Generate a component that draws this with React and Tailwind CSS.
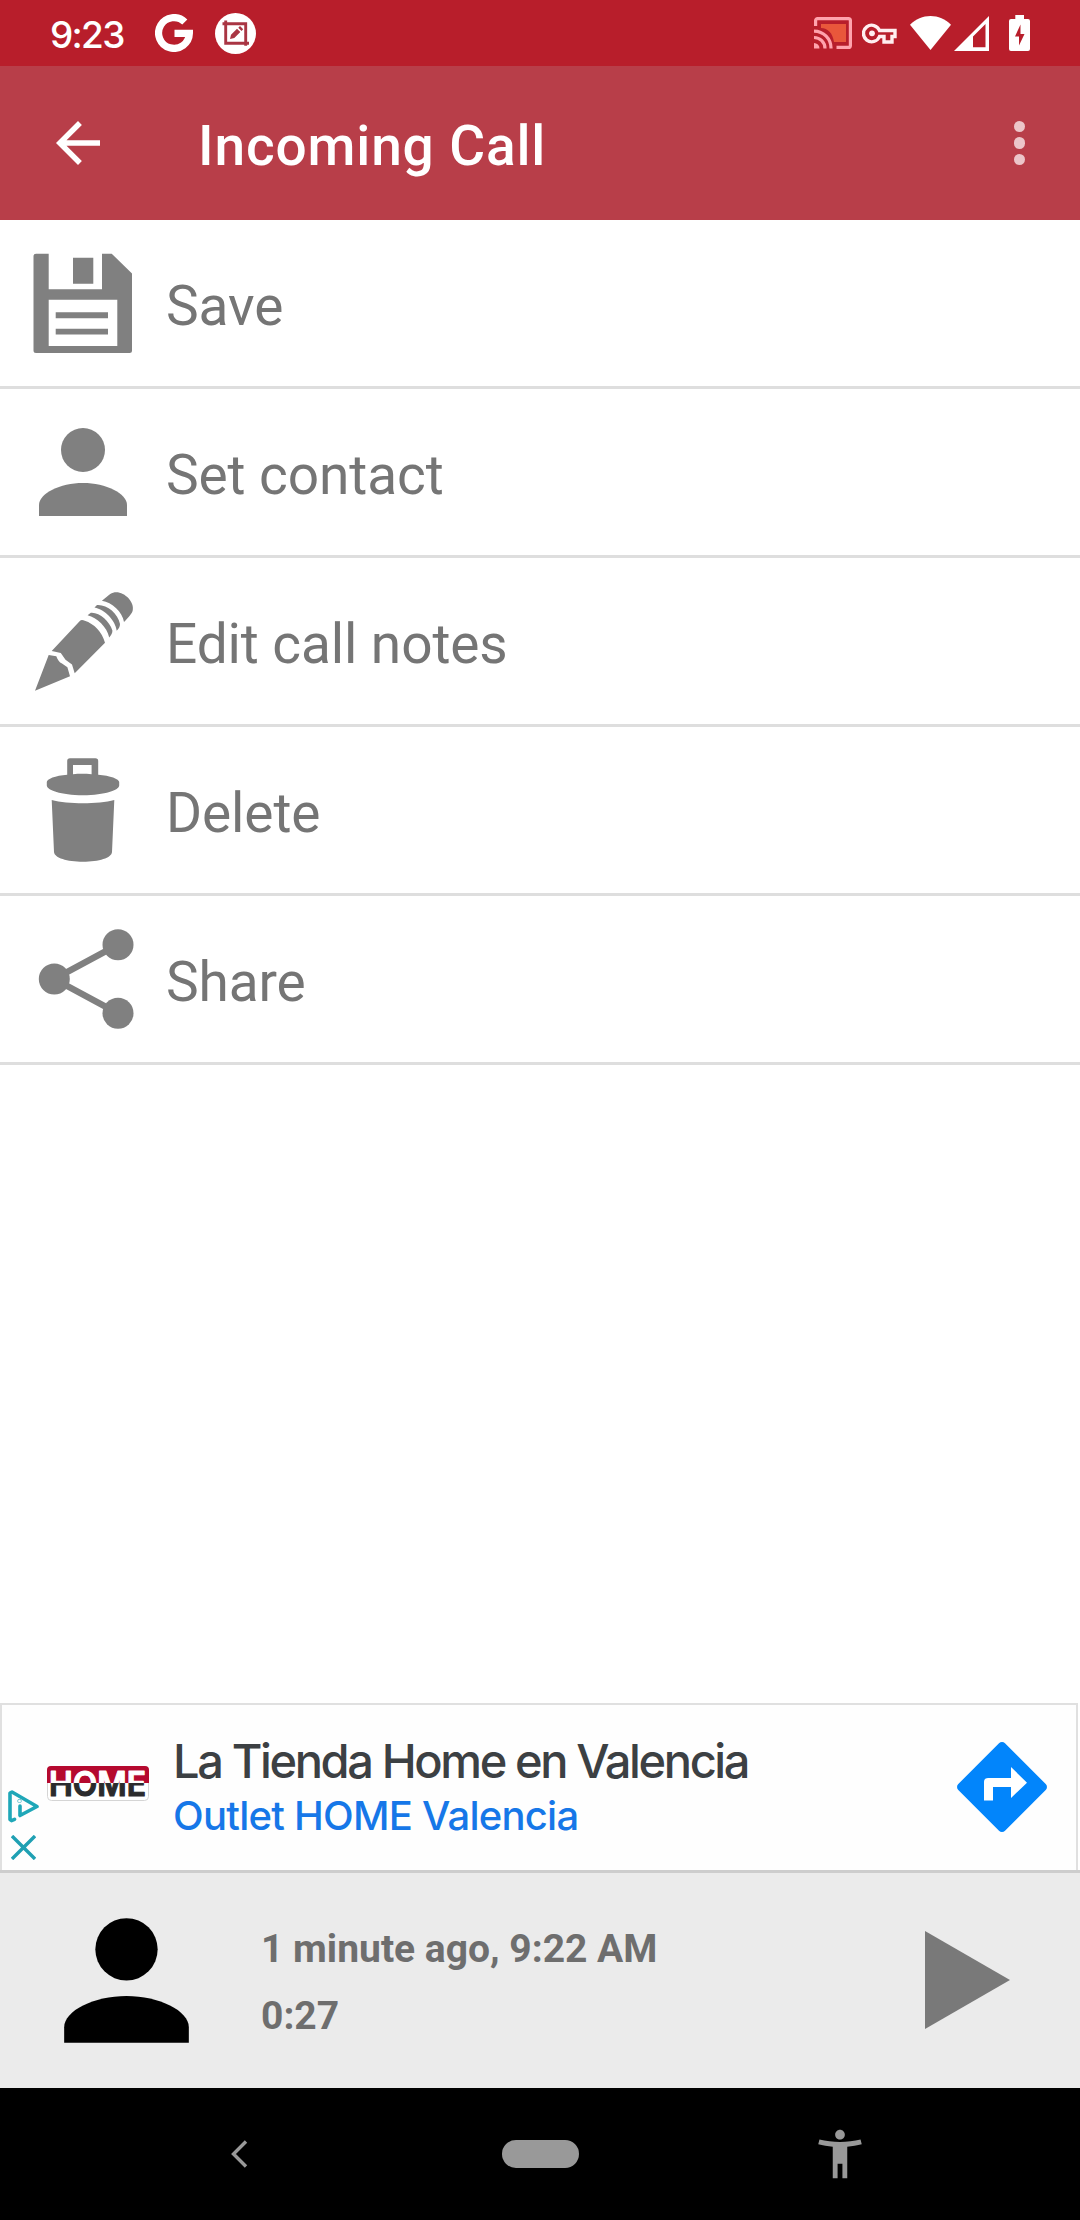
const ICON = 'h-[132px] w-[132px] shrink-0 fill-[#808080]';

function PersonIcon({ className }) {
    return (
        <svg viewBox="0 0 24 24" className={className}>
            <circle cx="12" cy="8" r="4" />
            <path d="M12 14c-4.2 0-8 1.9-8 4v2h16v-2c0-2.1-3.8-4-8-4z" />
        </svg>
    );
}

function SaveIcon() {
    return (
        <svg viewBox="0 0 132 132" className={ICON}>
            <path
                fillRule="evenodd"
                d="M19 16.7h12.7v35.6H85V16.7h9.7L115 36.5v77a2.5 2.5 0 0 1-2.5 2.5H19a2.5 2.5 0 0 1-2.5-2.5V19.2a2.5 2.5 0 0 1 2.5-2.5zM31.7 62.7V109h68.6V62.700z"
            />
            <path d="M56 20.7h20.3v26H56zM38.7 75.3H91v5.9H38.7zM38.7 91.7H91v5.7H38.7z" />
        </svg>
    );
}

function PencilIcon() {
    return (
        <svg viewBox="0 0 132 132" className={ICON}>
            <path d="M18 115.7 31.7 80l7.6 1.2c1.4 3.8 3 6 5.7 7.3l5.4 3.7 2.6 9z" />
            <path d="M34.7 76 62.6 46.2c1.4-1.5 3-1.2 5.2-.5C77 48.7 85 56.5 88 67.7L57.7 98.3 55 89.5l-6.500-4.7-4.7-6.800z" />
            <path d="M70.6 40.3 73.8 37.8C82.5 37 92.5 46 95.4 55.5c.2 2.5-1.2 4.8-3.2 7C90 52 80 42.5 70.6 40.3z" />
            <path d="M77.5 32.5 80 30c9.5-.8 21 8 23 19 0 2.8-1.3 4.9-3.3 6.7C98.5 45.5 88 34.5 77.5 32.5z" />
            <path d="M84.9 25.7 93.2 19c10-6.5 25 6.5 22.5 16.5-.6 3-4.5 7.2-8.7 11.5C105.5 37 95 27.3 84.9 25.7z" />
        </svg>
    );
}

function TrashIcon() {
    return (
        <svg viewBox="0 0 132 132" className={ICON}>
            <path
                fillRule="evenodd"
                d="M53 14.3h25.4a2.8 2.8 0 0 1 2.8 2.8v13.6c12 .9 21 4.3 21 7.3v3.500c0 4.5-14 9.7-36.2 9.7s-36.2-5.2-36.2-9.7V38c0-3 8.4-6.4 20.4-7.3V17.1a2.8 2.8 0 0 1 2.8-2.8zM56 21v9.2c6-.5 12-.5 18.6 0V21z"
            />
            <path d="M34.7 56c8 2.2 20 3.3 31.3 3.3S89.3 58.2 97.3 56l-2.300 52c-.4 6-13 9.7-29 9.7S37.500 114 37 108z" />
        </svg>
    );
}

function ShareIcon() {
    return (
        <svg viewBox="0 0 132 132" className={ICON}>
            <path d="M101 31.7 37.3 66 101 100.3" fill="none" stroke="#808080" strokeWidth="6.5" />
            <circle cx="37.3" cy="66" r="15.5" />
            <circle cx="101" cy="31.7" r="15.5" />
            <circle cx="101" cy="100.3" r="15.5" />
        </svg>
    );
}

const actions = [
    { label: 'Save', Icon: SaveIcon },
    { label: 'Set contact', Icon: () => <PersonIcon className={ICON} /> },
    { label: 'Edit call notes', Icon: PencilIcon },
    { label: 'Delete', Icon: TrashIcon },
    { label: 'Share', Icon: ShareIcon },
];

function StatusBar() {
    return (
        <div className="flex h-[66px] items-center bg-[#b81e2b] pr-[50px] pl-[50px]">
            <span className="w-[105px] pt-[3px] font-['Inter',sans-serif] text-[37px] leading-none font-medium tracking-[-1.7px] text-white">9:23</span>
            <svg viewBox="0 0 38 38" className="h-[38px] w-[38px]">
                <path d="M29.8 8A15.4 15.4 0 1 0 34.4 19.300H19.5" fill="none" stroke="white" strokeWidth="7.2" />
            </svg>
            <svg viewBox="0 0 41 41" className="ml-[22px] h-[41px] w-[41px]">
                <circle cx="20.5" cy="20.5" r="20.5" fill="white" />
                <path d="M7.5 10.7h23.2v22M10.7 7.500v22.7h23.3" fill="none" stroke="#a93543" strokeWidth="2.9" />
                <path d="M15 26l1-4.200 6-6 3.300 3.300-6 6zM23.300 14.700l1.700-1.700 3.200 3.200-1.700 1.700z" fill="#a93543" />
            </svg>

            <div className="ml-auto flex items-center">
                {/* Cast */}
                <svg viewBox="0 0 38 32" className="h-8 w-[38px]" fill="none" stroke="#ffa3ad" strokeWidth="3.2">
                    <path d="M7 7h25v18H20C18.5 15.5 14 11.5 7 11z" fill="#e9573b" stroke="none" />
                    <path d="M1.6 9V3.6a2 2 0 0 1 2-2h30.8a2 2 0 0 1 2 2v24.8a2 2 0 0 1-2 2H22.5" />
                    <path d="M0 14.1A17 17 0 0 1 17 31.5M0 20.5A11 11 0 0 1 11 31.5" />
                    <path d="M0 26a5.5 5.5 0 0 1 5.5 5.5H0z" fill="#ffa3ad" stroke="none" />
                </svg>
                {/* VPN key */}
                <svg viewBox="0 0 35 21" className="ml-[10px] h-[21px] w-[35px]" fill="none" stroke="#ffeef0" strokeWidth="3.4">
                    <path d="M17.5 7.5A8.3 8.3 0 1 0 17.5 13.5H22v5.5h8v-5.5h3v-6z" />
                    <circle cx="10" cy="10.3" r="2.9" fill="#ffeef0" stroke="none" />
                </svg>
                {/* Wifi */}
                <svg viewBox="0 0 41 34" className="ml-[13px] h-[34px] w-[41px]">
                    <path d="M0 8.800C11-2.900 30-2.900 41 8.800L20.500 34z" fill="white" />
                </svg>
                {/* Mobile signal */}
                <svg viewBox="0 0 35 35" className="ml-[3px] h-[35px] w-[35px]">
                    <path fillRule="evenodd" d="M0 35 35 0v35zM19 20.5V31.2h12.5V8z" fill="white" />
                </svg>
                {/* Battery */}
                <svg viewBox="0 0 21 36" className="ml-5 h-9 w-[21px]">
                    <path
                        fillRule="evenodd"
                        d="M6.3 0h8.7v4h4a2 2 0 0 1 2 2v28a2 2 0 0 1-2 2H2a2 2 0 0 1-2-2V6a2 2 0 0 1 2-2h4.300zM11.5 9.5 6 21.5h4v9L15.5 19h-4z"
                        fill="white"
                    />
                </svg>
            </div>
        </div>
    );
}

function AppBar() {
    return (
        <header className="flex h-[154px] items-center bg-[#b83e49] pr-[55px] pl-[45px]">
            <svg viewBox="0 0 24 24" className="h-[66px] w-[66px]" fill="white">
                <path d="M20 11H7.830l5.590-5.590L12 4l-8 8 8 8 1.410-1.410L7.830 13H20v-2z" />
            </svg>
            <h1 className="ml-[87px] pt-[6px] text-[55px] leading-none font-medium tracking-[0.850px] text-white">Incoming Call</h1>
            <div className="ml-auto flex flex-col gap-[5px]">
                <span className="h-[11.5px] w-[11.5px] rounded-full bg-[#ecc5c9]" />
                <span className="h-[11.5px] w-[11.5px] rounded-full bg-[#ecc5c9]" />
                <span className="h-[11.5px] w-[11.5px] rounded-full bg-[#ecc5c9]" />
            </div>
        </header>
    );
}

function AdBanner() {
    return (
        <div className="mr-[2px] flex h-[167px] border-2 border-b-0 border-[#e0e0e0] bg-[#fefefe] font-['Inter',sans-serif]">
            <div className="flex w-[43px] shrink-0 flex-col items-start gap-3 pt-[85px] pl-[6px]">
                <svg viewBox="0 0 31 33" className="h-[33px] w-[31px]" fill="none" stroke="#1fa7b8" strokeWidth="3.6" strokeLinecap="round" strokeLinejoin="round">
                    <path d="M6.5 29.3 3.5 30.6 2 29.600V3L4 2l25 14.5L12 25.5V16" />
                    <circle cx="11.5" cy="11" r="0.3" />
                </svg>
                <svg viewBox="0 0 25 25" className="ml-[3px] h-[25px] w-[25px]" fill="none" stroke="#1fa0b3" strokeWidth="3.4">
                    <path d="M1 1l23 23M24 1 1 24" />
                </svg>
            </div>
            <svg viewBox="0 0 104 36" className="mt-[60px] h-9 w-[104px] shrink-0 overflow-visible">
                <defs>
                    <linearGradient id="logo" gradientUnits="userSpaceOnUse" x1="0" y1="0" x2="0" y2="36">
                        <stop offset="0.5" stopColor="white" />
                        <stop offset="0.5" stopColor="#2b2b2d" />
                    </linearGradient>
                </defs>
                <rect x="2.5" y="1.5" width="101" height="34" rx="4" fill="white" stroke="#d5d5d5" />
                <path d="M2 18V5a4 4 0 0 1 4-4h94a4 4 0 0 1 4 4v13z" fill="#b5092f" />
                <text
                    x="4"
                    y="30.7"
                    textLength="97"
                    lengthAdjust="spacingAndGlyphs"
                    fill="url(#logo)"
                    stroke="url(#logo)"
                    strokeWidth="1.2"
                    strokeLinejoin="round"
                    className="font-['Inter',sans-serif] text-[34px] font-semibold"
                >
                    HOME
                </text>
            </svg>
            <div className="ml-[24px] pt-[29px] whitespace-nowrap">
                <p className="text-[47px] leading-[54px] font-[450] tracking-[-2.380px] text-[#3c4043]">La Tienda Home en Valencia</p>
                <p className="text-[40px] leading-[55px] font-medium tracking-[-0.750px] text-[#1677e8]">Outlet HOME Valencia</p>
            </div>
            <svg viewBox="0 0 90 90" className="mt-[37px] mr-[29px] ml-auto h-[90px] w-[90px] shrink-0">
                <path d="M42 1.3a4.2 4.2 0 0 1 6 0L88.7 42a4.2 4.2 0 0 1 0 6L48 88.7a4.2 4.2 0 0 1-6 0L1.3 48a4.2 4.2 0 0 1 0-6z" fill="#0285fb" />
                <path d="M27 58.5V40q0-4 4-4h23V25l16 15.700L54 56V45H36v13.5z" fill="white" />
            </svg>
        </div>
    );
}

function CallFooter() {
    return (
        <footer className="flex h-[218px] items-center border-t-[3px] border-[#cdcdcd] bg-[#ebebeb] pr-[70px] pl-[33px]">
            <PersonIcon className="h-[187px] w-[187px]" />
            <div className="ml-[41px] pt-1 text-[39px] leading-[67px] font-bold text-[#6e6e6e]">
                <p>1 minute ago, 9:22 AM</p>
                <p>0:27</p>
            </div>
            <svg viewBox="0 0 85 98" className="mb-[2px] ml-auto h-[98px] w-[85px]">
                <path d="M0 0 85 49 0 98z" fill="#797979" />
            </svg>
        </footer>
    );
}

function NavBar() {
    return (
        <nav className="flex h-[132px] items-center bg-black pl-[230px]">
            <svg viewBox="0 0 18 28" className="h-7 w-[18px]">
                <path d="M16 1.5 3.5 14 16 26.5" fill="none" stroke="#999" strokeWidth="3.4" />
            </svg>
            <div className="ml-[254px] h-7 w-[77px] rounded-full bg-[#999]" />
            <svg viewBox="0 0 24 24" className="ml-[232px] h-[58px] w-[58px] fill-[#999]">
                <path d="M20.5 6c-2.610.7-5.670 1-8.500 1s-5.890-.3-8.500-1L3 8c1.860.5 4 .830 6 1v13h2v-6h2v6h2V9c2-.17 4.140-.5 6-1l-.5-2zM12 6c1.100 0 2-.9 2-2s-.9-2-2-2-2 .9-2 2 .9 2 2 2z" />
            </svg>
        </nav>
    );
}

export default function App() {
    return (
        <div className="flex h-[2220px] w-[1080px] flex-col overflow-hidden bg-white font-['Roboto',sans-serif]">
            <StatusBar />
            <AppBar />
            <ul>
                {actions.map(({ label, Icon }) => (
                    <li key={label} className="flex h-[169px] items-center border-b-[3px] border-[#dedede] pl-[17px]">
                        <Icon />
                        <span className="ml-[17px] pt-[6px] text-[55px] leading-none tracking-[-0.1px] text-[#757575]">{label}</span>
                    </li>
                ))}
            </ul>
            <div className="mt-auto">
                <AdBanner />
                <CallFooter />
                <NavBar />
            </div>
        </div>
    );
}
